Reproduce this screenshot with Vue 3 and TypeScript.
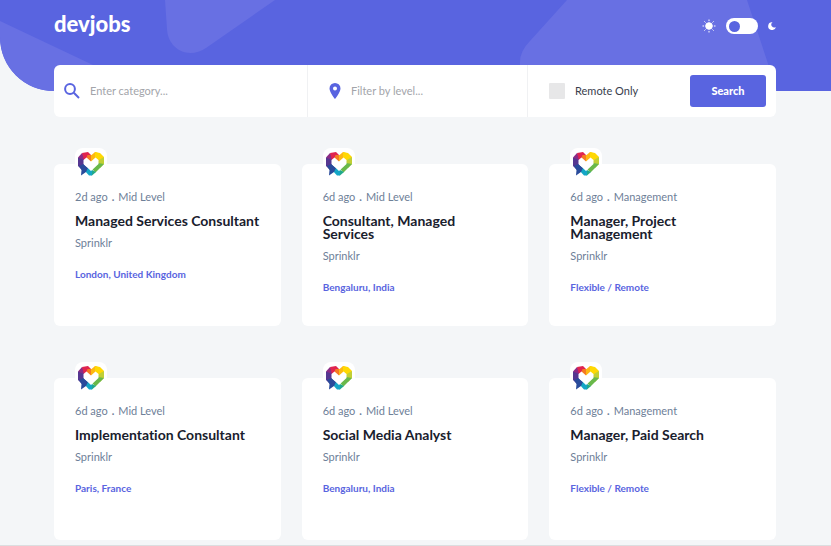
<script setup lang="ts">
import { ref } from 'vue'

interface Job {
  id: number
  posted: string
  level: string
  title: string
  company: string
  location: string
}

const category = ref('')
const level = ref('')
const remoteOnly = ref(false)
const darkMode = ref(false)

const jobs: Job[] = [
  { id: 1, posted: '2d ago', level: 'Mid Level', title: 'Managed Services Consultant', company: 'Sprinklr', location: 'London, United Kingdom' },
  { id: 2, posted: '6d ago', level: 'Mid Level', title: 'Consultant, Managed Services', company: 'Sprinklr', location: 'Bengaluru, India' },
  { id: 3, posted: '6d ago', level: 'Management', title: 'Manager, Project Management', company: 'Sprinklr', location: 'Flexible / Remote' },
  { id: 4, posted: '6d ago', level: 'Mid Level', title: 'Implementation Consultant', company: 'Sprinklr', location: 'Paris, France' },
  { id: 5, posted: '6d ago', level: 'Mid Level', title: 'Social Media Analyst', company: 'Sprinklr', location: 'Bengaluru, India' },
  { id: 6, posted: '6d ago', level: 'Management', title: 'Manager, Paid Search', company: 'Sprinklr', location: 'Flexible / Remote' },
]
</script>

<template>
  <div class="page">
    <header class="header">
      <svg class="pattern" viewBox="0 0 831 91" preserveAspectRatio="none" aria-hidden="true">
        <path d="M0 21 L148 91 H0Z" />
        <path d="M165 0 L167 29 C168 49 188 60 206 48 L275 0Z" />
        <path d="M567 0 L530 41 Q520 51 520 62 V91 H777 L747 0Z" />
      </svg>
      <a class="brand" href="#">devjobs</a>
      <label class="theme">
        <svg class="sun" viewBox="0 0 14 14" aria-hidden="true">
          <circle cx="7" cy="7" r="3.3" />
          <path d="M7 .5v1.6M7 11.9v1.6M.5 7h1.6M11.9 7h1.6M2.4 2.4l1.1 1.1M10.5 10.5l1.1 1.1M2.4 11.6l1.1-1.1M10.5 3.5l1.1-1.1" />
        </svg>
        <input v-model="darkMode" class="switch" type="checkbox" role="switch" aria-label="Dark mode" />
        <svg class="moon" viewBox="0 0 8 8" aria-hidden="true">
          <path d="M4.6 .2A2.400 2.400 0 1 0 7.900 4.900 A3.900 3.900 0 1 1 4.600 .2Z" />
        </svg>
      </label>
    </header>

    <main class="content">
      <form class="search" @submit.prevent>
        <label class="field">
          <svg class="glass" viewBox="0 0 16 16" aria-hidden="true">
            <circle cx="6" cy="6" r="4.9" />
            <path d="M9.8 9.8 L15 15" />
          </svg>
          <input v-model="category" class="text" type="text" placeholder="Enter category..." aria-label="Category" />
        </label>
        <label class="field place">
          <svg class="pin" viewBox="0 0 12 16" aria-hidden="true">
            <path fill-rule="evenodd" d="M6 0a5.5 5.5 0 0 1 5.5 5.5C11.5 9.500 6 16 6 16S.5 9.500 .5 5.500A5.500 5.500 0 0 1 6 0Zm0 3.500a2 2 0 1 0 0 4 2 2 0 0 0 0-4Z" />
          </svg>
          <input v-model="level" class="text" type="text" placeholder="Filter by level..." aria-label="Level" />
        </label>
        <div class="field last">
          <label class="remote">
            <input v-model="remoteOnly" class="box" type="checkbox" />
            <span>Remote Only</span>
          </label>
          <button class="submit" type="submit">Search</button>
        </div>
      </form>

      <section class="jobs">
        <article v-for="job in jobs" :key="job.id" class="card">
          <div class="logo">
            <svg viewBox="0 0 26 24" aria-hidden="true">
              <path fill="#8b2b86" d="M0 5.500 4 1 8.500 7 6 9.500 0 10Z" />
              <path fill="#553791" d="M0 5.500 6 8v5L4 18 0 14Z" />
              <path fill="#e0244f" d="M4 1 10 0 13 3 9.500 8 6 8Z" />
              <path fill="#f57a22" d="M9.500 3 13 3 17 5 13 12 8 7.500Z" />
              <path fill="#fdb813" d="M13 3.500 17 0 20 1 19 7 13 12Z" />
              <path fill="#ffd803" d="M17 0 22 1 26 5 25 9 20 8.500 17 6.500Z" />
              <path fill="#c1cf35" d="M20 8.500 26 5V12L22 16 19 12Z" />
              <path fill="#69b84a" d="M26 12 17.500 20.500 14 17 20 11Z" />
              <path fill="#20a98c" d="M18 20 14 23.500 10 21 13 17.500Z" />
              <path fill="#14a6c6" d="M14 23.500H11L6 18 9 14 14 18Z" />
              <path fill="#294b9b" d="M1 14 5.500 12 10 16 8 20 3 23.500 3.500 18Z" />
              <path fill="#fff" d="M5.500 8 8.500 5.500 13 9.500 17.500 5.500 20.500 8V12L13 19 5.500 12Z" />
            </svg>
          </div>
          <p class="meta">{{ job.posted }}<b class="dot">.</b>{{ job.level }}</p>
          <h2 class="title">{{ job.title }}</h2>
          <p class="company">{{ job.company }}</p>
          <p class="location">{{ job.location }}</p>
        </article>
      </section>
    </main>
  </div>
</template>

<style>
body {
  margin: 0;
  background: #f4f6f8;
}
</style>

<style scoped>
* {
  box-sizing: border-box;
}

.page {
  min-height: 100vh;
  padding-bottom: 4px;
  border-bottom: 1px solid #dcdee0;
  background: #f4f6f8;
  font-family: Lato, sans-serif;
  font-size: 11px;
  font-variant-ligatures: none;
  line-height: 16px;
  color: #6e8098;
}

.header {
  position: relative;
  display: flex;
  align-items: flex-start;
  justify-content: space-between;
  height: 91px;
  padding: 10px 55px 0 54px;
  overflow: hidden;
  border-bottom-left-radius: 54px;
  background: #5964e0;
}

.pattern {
  position: absolute;
  inset: 0;
  width: 100%;
  height: 100%;
  fill: #6870e3;
}

.brand {
  position: relative;
  font-size: 22px;
  font-weight: 900;
  line-height: 28px;
  color: #fff;
  text-decoration: none;
}

.theme {
  position: relative;
  display: flex;
  align-items: center;
  gap: 10px;
  height: 32px;
  fill: #fff;
}

.sun {
  width: 14px;
  height: 14px;
  stroke: #fff;
  stroke-width: 1;
}

.moon {
  width: 8px;
  height: 8px;
}

.switch {
  appearance: none;
  display: flex;
  align-items: center;
  width: 32px;
  height: 16px;
  margin: 0;
  padding: 0 3px;
  border-radius: 8px;
  background: #fff;
}

.switch::before {
  content: "";
  width: 11px;
  height: 11px;
  border-radius: 50%;
  background: #5964e0;
}

.switch:checked {
  justify-content: flex-end;
}

.content {
  padding: 0 55px 0 54px;
}

.search {
  position: relative;
  display: grid;
  grid-template-columns: 254fr 220fr 248fr;
  height: 52px;
  margin-top: -26px;
  border-radius: 6px;
  background: #fff;
}

.field {
  display: flex;
  align-items: center;
  gap: 10px;
  min-width: 0;
  padding: 0 10px;
  border-right: 1px solid #f0f1f3;
}

.place {
  padding-left: 21px;
}

.last {
  justify-content: space-between;
  padding-left: 21px;
  border-right: 0;
}

.glass,
.pin {
  flex: none;
  height: 16px;
}

.glass {
  width: 16px;
  fill: none;
  stroke: #5964e0;
  stroke-width: 2;
}

.pin {
  width: 12px;
  fill: #5964e0;
}

.text {
  flex: 1;
  min-width: 0;
  padding: 0;
  border: 0;
  outline: 0;
  background: transparent;
  font: inherit;
  color: #19202d;
}

.text::placeholder {
  color: #a3a5aa;
  opacity: 1;
}

.remote {
  display: flex;
  align-items: center;
  gap: 10px;
  color: #39404d;
}

.box {
  appearance: none;
  width: 16px;
  height: 16px;
  margin: 0;
  border-radius: 1px;
  background: #e7e7e8;
}

.box:checked {
  background: #5964e0;
}

.submit {
  width: 76px;
  height: 32px;
  padding: 0;
  border: 0;
  border-radius: 3px;
  background: #5964e0;
  font: inherit;
  font-weight: 900;
  color: #fff;
}

.jobs {
  display: grid;
  grid-template-columns: repeat(3, 1fr);
  gap: 52px 21px;
  margin-top: 47px;
}

.card {
  min-height: 162px;
  padding: 0 21px 21px;
  border-radius: 6px;
  background: #fff;
}

.logo {
  display: flex;
  align-items: center;
  justify-content: center;
  width: 32px;
  height: 32px;
  margin-top: -16px;
  border-radius: 8px;
  background: #fff;
}

.logo svg {
  width: 26px;
  height: 24px;
}

.meta,
.company,
.location {
  margin: 0;
}

.meta {
  margin-top: 9px;
}

.dot {
  margin: 0 4px;
}

.title {
  margin: 9px 0 8px;
  font-size: 14px;
  font-weight: 700;
  line-height: 13px;
  color: #19202d;
}

.location {
  margin-top: 15px;
  font-size: 10px;
  font-weight: 700;
  color: #5964e0;
}
</style>
